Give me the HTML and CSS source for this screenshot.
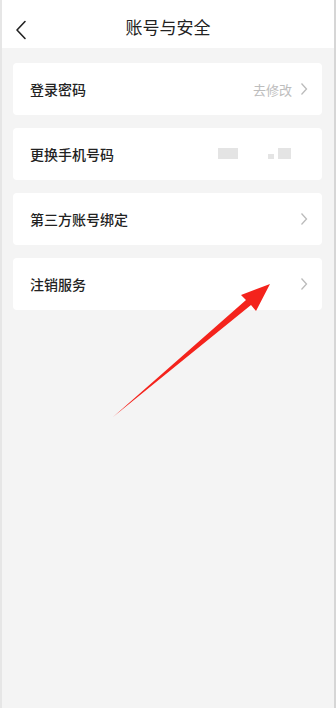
FILE: index.html
```html
<!DOCTYPE html>
<html lang="zh-CN">
<head>
    <meta charset="UTF-8">
    <meta name="viewport" content="width=device-width, initial-scale=1.0">
    <title>账号与安全</title>
    <link rel="stylesheet" href="styles.css">
</head>
<body>
    <div class="page">
        <div class="header">
            <svg class="back" width="12" height="20" viewBox="0 0 12 20">
                <path d="M10 1.5 L2 10 L10 18.5" fill="none" stroke="#222" stroke-width="1.6" stroke-linecap="round" stroke-linejoin="round"/>
            </svg>
            <h1>账号与安全</h1>
        </div>
        <div class="list">
            <div class="item">
                <span class="label">登录密码</span>
                <span class="value">去修改</span>
                <svg class="arrow" width="8" height="14" viewBox="0 0 8 14"><path d="M1.5 1.5 L6.5 7 L1.5 12.5" fill="none" stroke="#bbb" stroke-width="1.3"/></svg>
            </div>
            <div class="item">
                <span class="label">更换手机号码</span>
                <span class="blur">
                    <i class="px px-a"></i>
                    <i class="px px-b"></i>
                    <i class="px px-c"></i>
                </span>
            </div>
            <div class="item">
                <span class="label">第三方账号绑定</span>
                <svg class="arrow" width="8" height="14" viewBox="0 0 8 14"><path d="M1.5 1.5 L6.5 7 L1.5 12.5" fill="none" stroke="#bbb" stroke-width="1.3"/></svg>
            </div>
            <div class="item">
                <span class="label">注销服务</span>
                <svg class="arrow" width="8" height="14" viewBox="0 0 8 14"><path d="M1.5 1.5 L6.5 7 L1.5 12.5" fill="none" stroke="#bbb" stroke-width="1.3"/></svg>
            </div>
        </div>
        <svg class="pointer" width="336" height="708" viewBox="0 0 336 708">
            <polygon points="113,417 246,300 241,295 270,284 256,311 251,305" fill="#f4231c"/>
        </svg>
    </div>
</body>
</html>
```

FILE: styles.css
```css
body {
    margin: 0;
    font-family: "Noto Sans CJK SC", "Noto Sans", sans-serif;
    background: #f4f4f4;
}
.page {
    position: relative;
    min-height: 708px;
    border-left: 2px solid #e6e6e6;
    border-right: 2px solid #d6d6d6;
    box-sizing: border-box;
}
.header {
    height: 48px;
    padding-top: 5px;
    box-sizing: border-box;
    background: #fff;
    display: flex;
    align-items: center;
    justify-content: center;
    position: relative;
}
.header h1 {
    margin: 0;
    font-size: 17px;
    font-weight: 400;
    color: #222;
}
.back {
    position: absolute;
    left: 13px;
    top: 20px;
}
.list {
    display: flex;
    flex-direction: column;
    gap: 13px;
    padding: 15px 12px 0 11px;
}
.item {
    height: 52px;
    background: #fff;
    border-radius: 4px;
    display: flex;
    align-items: center;
    padding: 0 14px 0 17px;
}
.label {
    flex: 1;
    font-size: 14px;
    font-weight: 500;
    color: #222;
}
.value {
    font-size: 13px;
    color: #bdbdbd;
    margin-right: 8px;
}
.arrow {
    display: block;
}
.blur {
    position: relative;
    width: 90px;
    height: 20px;
    margin-right: 6px;
}
.px {
    position: absolute;
    background: #e4e4e4;
}
.px-a {
    left: 6px;
    top: 4px;
    width: 20px;
    height: 11px;
}
.px-b {
    left: 56px;
    top: 10px;
    width: 6px;
    height: 5px;
}
.px-c {
    left: 66px;
    top: 4px;
    width: 13px;
    height: 11px;
}
.pointer {
    position: absolute;
    left: -2px;
    top: 0;
    pointer-events: none;
}
```
